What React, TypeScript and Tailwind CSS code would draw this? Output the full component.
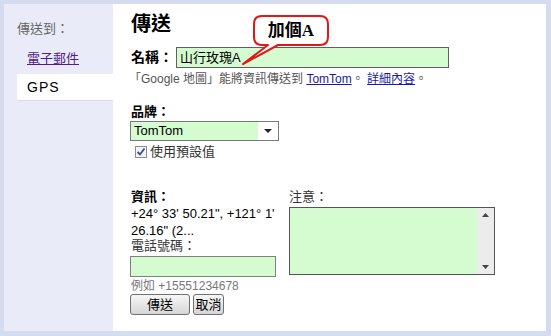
import React from "react";

const font = { fontFamily: '"Liberation Sans", Arial, "Noto Sans CJK TC", sans-serif' };

export default function App() {
  return (
    <div
      className="w-[551px] h-[336px] bg-[#d5dcf0] pt-[4px] pl-[4px] pr-[5px] pb-[5px] flex text-[13px] text-black"
      style={font}
    >
      {/* Sidebar */}
      <div className="w-[109px] h-full bg-[#e9ecf8] flex flex-col">
        <div className="pl-[13px] pt-[16px] text-[13px] leading-[18px] text-[#666]">傳送到：</div>
        <div className="pl-[23px] mt-[12px] leading-[18px]">
          <span className="text-[#551a8b] underline">電子郵件</span>
        </div>
        <div className="ml-[13px] mt-[6px] h-[27px] bg-white border-b border-[#dcdcdc] flex items-center pl-[10px] text-[14px] tracking-[1px]">
          GPS
        </div>
      </div>

      {/* Main */}
      <div className="flex-1 h-full bg-white relative pl-[18px] pt-[7px]">
        <div className="text-[20px] font-bold leading-[27px]">傳送</div>

        {/* name row */}
        <div className="flex items-center mt-[9px] h-[21px]">
          <span className="font-bold text-[14px] w-[45px] leading-[21px]">名稱：</span>
          <div className="w-[273px] h-[21px] bg-[#d4fcd0] border border-[#606060] flex items-center pl-[3px] text-[13px]">
            山行玫瑰A
          </div>
        </div>
        <div className="mt-[3px] text-[12px] leading-[16px] text-[#555] -ml-[2px]">
          「Google 地圖」能將資訊傳送到 <span className="text-[#1a1aa6] underline">TomTom</span>。{" "}
          <span className="text-[#1a1aa6] underline">詳細內容</span>。
        </div>

        <div className="mt-[17px] font-bold text-[13px] leading-[16px]">品牌：</div>
        <div className="-ml-[1px] mt-[1px] w-[149px] h-[20px] border border-[#7a7a7a] flex">
          <div className="flex-1 bg-[#d4fcd0] flex items-center pl-[3px] text-[13px]">TomTom</div>
          <div className="w-[20px] bg-white flex items-center justify-center">
            <svg width="8" height="5" viewBox="0 0 8 5">
              <path d="M0 0 L8 0 L4 4 Z" fill="#222" />
            </svg>
          </div>
        </div>
        <div className="flex items-center mt-[3px] ml-[4px] h-[16px]">
          <svg width="12" height="12" viewBox="0 0 12 12">
            <rect x="0.5" y="0.5" width="11" height="11" fill="#f4f4f4" stroke="#8c8c8c" />
            <path d="M2.5 6 L5 8.5 L9.5 2.5" stroke="#2b4fa0" strokeWidth="1.8" fill="none" />
          </svg>
          <span className="ml-[3px] text-[13px] text-[#333]">使用預設值</span>
        </div>

        {/* two columns */}
        <div className="flex mt-[29px]">
          <div className="w-[160px]">
            <div className="font-bold text-[13px] leading-[16px]">資訊：</div>
            <div className="text-[13px] leading-[18px] w-[150px]">+24° 33' 50.21", +121° 1'</div>
            <div className="text-[13px] leading-[16px]">26.16" (2...</div>
            <div className="text-[13px] leading-[14px] text-[#333]">電話號碼：</div>
            <div className="-ml-[1px] mt-[3px] w-[146px] h-[21px] bg-[#d4fcd0] border border-[#808080]" />
            <div className="text-[12px] leading-[16px] text-[#777] mt-[1px]">例如 +15551234678</div>
            <div className="flex gap-[3px] -ml-[1px]">
              <button className="w-[60px] h-[21px] rounded-[3px] border border-[#707070] bg-gradient-to-b from-[#f6f6f6] to-[#d6d6d6] text-[13px] leading-[18px]">
                傳送
              </button>
              <button className="w-[31px] h-[21px] rounded-[3px] border border-[#707070] bg-gradient-to-b from-[#f6f6f6] to-[#d6d6d6] text-[13px] leading-[18px]">
                取消
              </button>
            </div>
          </div>
          <div>
            <div className="text-[13px] leading-[16px] text-[#333] ml-[-2px]">注意：</div>
            <div className="mt-[2px] -ml-[2px] w-[206px] h-[68px] border border-[#555] flex">
              <div className="flex-1 bg-[#d4fcd0]" />
              <div className="w-[17px] bg-[#ececec] flex flex-col items-center justify-between py-[5px]">
                <svg width="7" height="4" viewBox="0 0 7 4">
                  <path d="M0 4 L7 4 L3.5 0 Z" fill="#444" />
                </svg>
                <svg width="7" height="4" viewBox="0 0 7 4">
                  <path d="M0 0 L7 0 L3.5 4 Z" fill="#444" />
                </svg>
              </div>
            </div>
          </div>
        </div>

        {/* callout */}
        <svg className="absolute left-[124px] top-[4px]" width="100" height="60" viewBox="0 0 100 60">
          <path
            d="M25 8 H83 Q91 8 91 16 V29 Q91 37 83 37 H41 L6 56 L31 37 H25 Q17 37 17 29 V16 Q17 8 25 8 Z"
            fill="white"
            stroke="#e01818"
            strokeWidth="2"
            strokeLinejoin="round"
          />
        </svg>
        <div
          className="absolute left-[141px] top-[12px] w-[74px] h-[29px] flex items-center justify-center text-[17px] font-bold"
          style={{ fontFamily: '"Liberation Serif", "Noto Sans CJK TC", serif' }}
        >
          加個A
        </div>
      </div>
    </div>
  );
}
